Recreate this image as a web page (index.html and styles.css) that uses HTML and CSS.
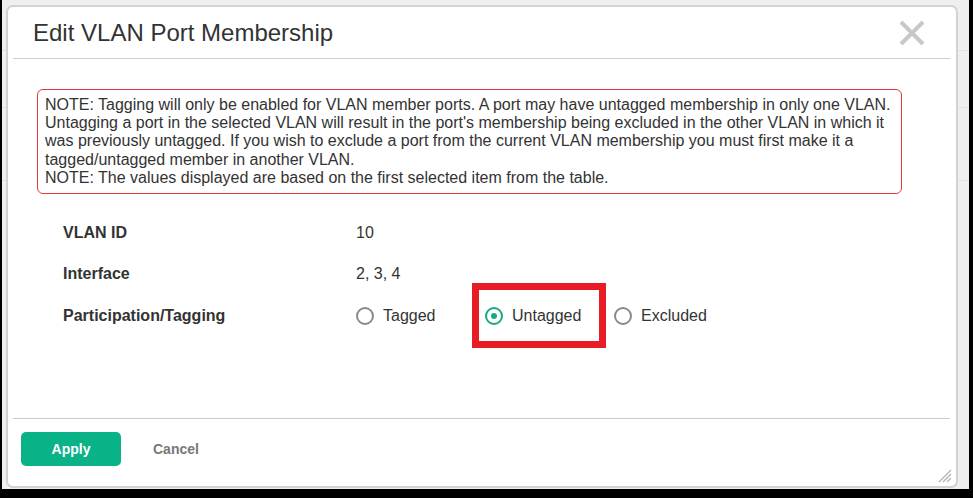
FILE: index.html
```html
<!DOCTYPE html>
<html>
<head>
<meta charset="utf-8">
<title>Edit VLAN Port Membership</title>
<link rel="stylesheet" href="styles.css">
</head>
<body>
<div class="screen">
  <div class="modal">
    <div class="header">
      <h1 class="title">Edit VLAN Port Membership</h1>
      <button class="close" aria-label="Close">
        <svg width="26" height="26" viewBox="0 0 26 26"><path d="M2 2 L24 24 M24 2 L2 24" stroke="#c8c8c8" stroke-width="4" fill="none"/></svg>
      </button>
    </div>
    <div class="body">
      <div class="note">
        <span class="line">NOTE: Tagging will only be enabled for VLAN member ports. A port may have untagged membership in only one VLAN.</span>
        <span class="line">Untagging a port in the selected VLAN will result in the port's membership being excluded in the other VLAN in which it</span>
        <span class="line">was previously untagged. If you wish to exclude a port from the current VLAN membership you must first make it a</span>
        <span class="line">tagged/untagged member in another VLAN.</span>
        <span class="line">NOTE: The values displayed are based on the first selected item from the table.</span>
      </div>
      <div class="form">
        <div class="row"><div class="label">VLAN ID</div><div class="value">10</div></div>
        <div class="row"><div class="label">Interface</div><div class="value">2, 3, 4</div></div>
        <div class="row">
          <div class="label">Participation/Tagging</div>
          <div class="value radios">
            <label class="option"><span class="radio"></span><span>Tagged</span></label>
            <label class="option highlighted"><span class="radio checked"></span><span>Untagged</span><span class="mark"></span></label>
            <label class="option"><span class="radio"></span><span>Excluded</span></label>
          </div>
        </div>
      </div>
    </div>
    <div class="footer">
      <button class="apply">Apply</button>
      <button class="cancel">Cancel</button>
    </div>
    <svg class="grip" width="14" height="14" viewBox="0 0 14 14"><path d="M13 1 L1 13 M13 5 L5 13 M13 9 L9 13" stroke="#b0b0b0" stroke-width="1.2" fill="none"/></svg>
  </div>
</div>
</body>
</html>
```
FILE: styles.css
```css
* { box-sizing: border-box; }
html, body { margin: 0; padding: 0; }
body {
  background: #000;
  width: 973px;
  height: 498px;
  overflow: hidden;
  font-family: "Liberation Sans", Arial, sans-serif;
  color: #333;
}
.screen {
  margin-left: 2px;
  width: 967px;
  height: 489px;
  background-color: #efefef;
  background-image:
    linear-gradient(#e2e2e2, #e2e2e2),
    linear-gradient(#e2e2e2, #e2e2e2),
    linear-gradient(#e2e2e2, #e2e2e2);
  background-size: 100% 1px;
  background-repeat: no-repeat;
  background-position: 0 50px, 0 107px, 0 180px;
  padding: 5px 0 0 4px;
}
.modal {
  position: relative;
  width: 952px;
  height: 483px;
  background: #fff;
  border: 2px solid #d2d2d2;
  border-radius: 7px;
  display: flex;
  flex-direction: column;
}
.header {
  height: 52px;
  margin: 0 6px 0 5px;
  border-bottom: 1px solid #cfcfcf;
  display: flex;
  align-items: center;
  justify-content: space-between;
  padding: 1px 25px 0 20px;
}
.title {
  margin: 0;
  font-size: 24px;
  font-weight: normal;
  color: #333;
}
.close {
  border: 0;
  background: none;
  padding: 0;
  width: 26px;
  height: 26px;
  display: flex;
}
.body {
  flex: 1;
  padding: 30px 54px 0 29px;
}
.note {
  border: 1px solid #e0393b;
  border-radius: 6px;
  padding: 6px 7px 6px;
  font-size: 16px;
  line-height: 18.2px;
  color: #333;
}
.line { display: block; white-space: nowrap; }
.form {
  margin-top: 18px;
  padding-left: 26px;
}
.row {
  display: flex;
  height: 41px;
  align-items: center;
  font-size: 16px;
}
.row:last-child { padding-top: 2px; }
.label {
  width: 293px;
  font-weight: bold;
  color: #333;
}
.value { color: #333; }
.radios { display: flex; }
.option {
  position: relative;
  width: 129px;
  display: flex;
  align-items: center;
  gap: 9px;
  height: 41px;
}
.radio {
  width: 18px;
  height: 18px;
  border: 2px solid #8a8a8a;
  border-radius: 50%;
  display: flex;
  align-items: center;
  justify-content: center;
}
.radio.checked { border-color: #1aa882; }
.radio.checked::after {
  content: "";
  width: 6px;
  height: 6px;
  border-radius: 50%;
  background: #1aa882;
}
.mark {
  position: absolute;
  left: -13px;
  top: -12px;
  width: 134px;
  height: 65px;
  border: 7px solid #e81c24;
}
.footer {
  height: 68px;
  margin: 0 6px 0 5px;
  border-top: 1px solid #c8c8c8;
  padding: 13px 0 0 8px;
  display: flex;
  align-items: flex-start;
}
.apply {
  width: 100px;
  height: 34px;
  border: 0;
  border-radius: 5px;
  background: #0ab287;
  color: #fff;
  font-family: "Liberation Sans", Arial, sans-serif;
  font-weight: bold;
  font-size: 14px;
}
.cancel {
  margin-left: 32px;
  height: 34px;
  border: 0;
  background: none;
  padding: 0;
  color: #787878;
  font-family: "Liberation Sans", Arial, sans-serif;
  font-weight: bold;
  font-size: 14px;
}
.grip {
  position: absolute;
  right: 4px;
  bottom: 3px;
}
```
